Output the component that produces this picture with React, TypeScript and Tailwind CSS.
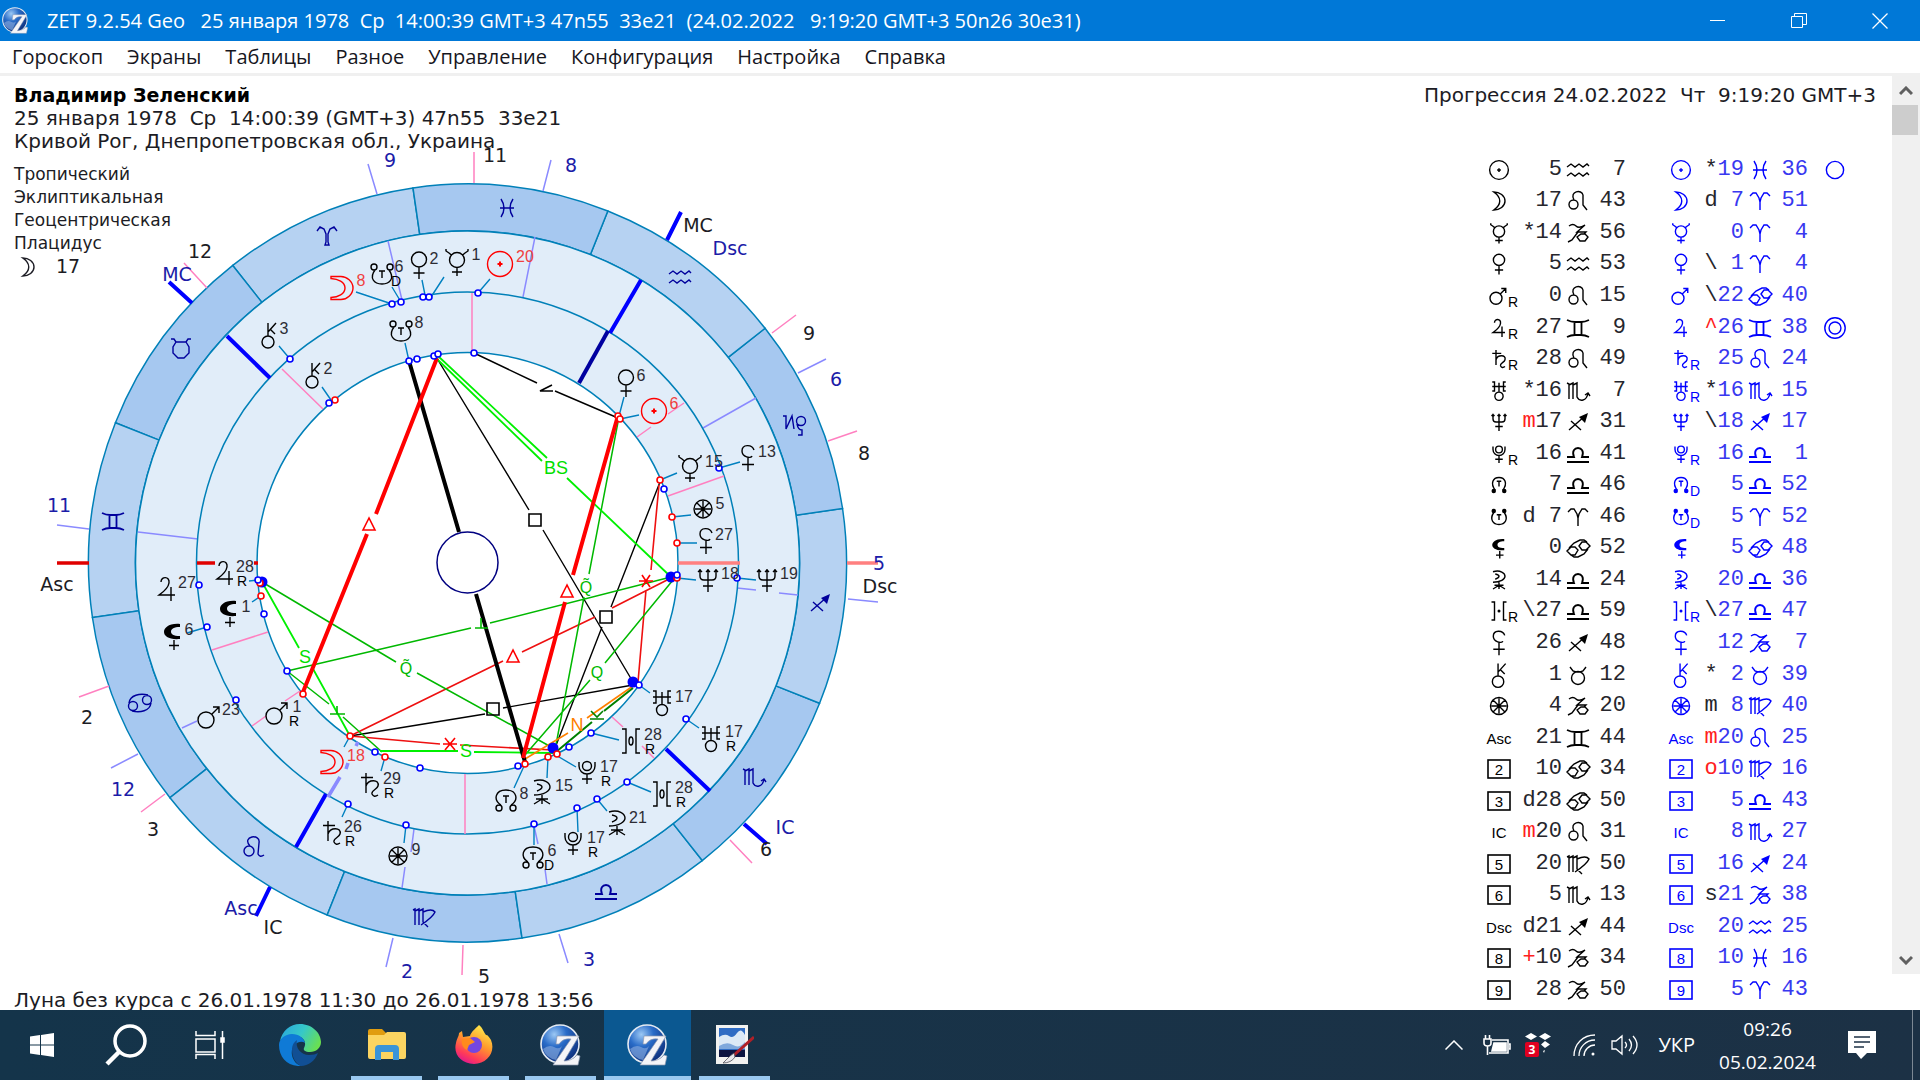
import { clsx } from "clsx";
import type { ReactNode } from "react";

const ring = (x: number, y: number, r: number) =>
  `M${x - r} ${y}a${r} ${r} 0 1 0 ${2 * r} 0a${r} ${r} 0 1 0 ${-2 * r} 0`;

type Shape = { d: string; fill?: string; bold?: boolean };

// every symbol is drawn round 0,0
const SHAPES: Record<string, Shape> = {
  sun: { d: ring(0, 0, 12.5), fill: "M-2.5-1h1.500v-1.500h2v1.500h1.500v2h-1.500v1.500h-2v-1.500h-1.500z" },
  moon: { d: "M-11-11.500H-2C5-12 11-6 11 0S5 12-2 11.500H-11V9.500C-4 9 3 6 3 0S-4-9-11-9.500Z" },
  mercury: { d: ring(0, -2, 7.5) + "M0 5.500V14M-5 10H5M-11-13v2l3 2 3 2.500M11-13v2l-3 2-3 2.500" },
  venus: { d: ring(0, -5.5, 7.5) + "M0 2V14M-5.500 8H5.500" },
  mars: { d: ring(-4, 3, 8) + "M2-3L9-10M3-10H9V-4" },
  jupiter: { d: "M-6-7C-6-13 3-13 2-6 1 0-4 3-8 6H8M4-2V12" },
  saturn: { d: "M-4-12V8M-9-7.500H3M-4 1C-2-6 10-6 8 1 7 5 1 5 2 9q2 4 6 1" },
  uranus: { d: ring(0, 7, 5.5) + "M-9-12h3v12h-3M9-12h-3v12h3M-9-6H9M0-11V1" },
  neptune: { d: "M-8-11v7q0 4 4 4H4q4 0 4-4v-7M0-11V12M-5 6H5M-10-8l2-2 2 2M-2-8l2-2 2 2M6-8l2-2 2 2" },
  pluto: { d: ring(0, -6, 4.5) + "M-8-10v4a8 8 0 0 0 16 0v-4M0 2V12M-5 7H5" },
  north: { d: ring(-7, 8, 3) + ring(7, 8, 3) + "M-5 5C-13 0-11-10 0-10S13 0 5 5M-3-4H3M0-4V3" },
  south: { d: ring(-8, -7, 3) + ring(8, -7, 3) + "M-7-4C-13 4-8 10 0 10S13 4 7-4M-3-3H3M0-3V4" },
  lilith: { d: "M1 4V14M-4 9.500H6", fill: "M7-12C-4-13-9-8-9-4S-4 4 7 3V0C0 0-2-2-2-4.500S1-9 7-9Z" },
  pallas: { d: "M-8-11C2-14 8-9 8-5S2 3-8 3M-5-8q5 1 5 3t-5 4M0 3V12M-6 7H6M0 7L-8 12M0 7L8 12" },
  transpluto: { d: "M-9-12h4V12h-4M9-12H5V12h4M0-4a2 4 0 0 0 0 8a2 4 0 0 0 0-8" },
  ceres: { d: "M6-8C4-14-6-14-6-7-6-1 3 1 4-2M0-1V13M-6 6.500H6" },
  chiron: { d: ring(-1, 7, 6) + "M-1 1V-12M-1-3L7-12M1-6L6-1" },
  fortune: { d: ring(0, 0, 9) + "M-8 0H8M0-8V8M-6-6L6 6M-6 6L6-6" },
  asteroid: { d: ring(0, 0, 7) + ring(0, 0, 12) },
  disc: { d: ring(0, 0, 11.5) },
  // table variants
  moonSmall: { d: "M-7-12C1-12 8-7 8 0S1 12-7 12C-1 8 1 4 1 0S-1-8-7-12Z" },
  northSmall: { d: "M-5 7C-12-2-8-10 0-10S12-2 5 7M-3-5H3M0-5V2", fill: ring(-7, 8, 3) + ring(7, 8, 3) },
  southSmall: { d: "M-7-6C-13 3-8 10 0 10S13 3 7-6M-3-3H3M0-3V4", fill: ring(-7, -8, 3) + ring(7, -8, 3) },
  transplutoSmall: { d: "M-10-12h4V12h-4M10-12H6V12h4", fill: ring(0, 0, 2) },
  // zodiac
  aries: { d: "M-10-5l3-3h3l3 5 1 4V9M10-5l-3-3H4L1-3 0 1" },
  taurus: { d: ring(0, 3, 6.5) + "M-8-8l3 4 3 1H2l3-1 3-4" },
  gemini: { d: "M-11-8q4 2 8 2H3q4 0 8-2M-11 9q4-2 8-2H3q4 0 8 2M-3.500-6V7M3.500-6V7", bold: true },
  cancer: { d: "M-11 3l4-4h4l3 3-3 5h-4zM1-2l3-4h4l4 4-4 4H4zM-9 0l5-5 6-3h4l3 2M10 1L6 6 0 9h-4l-3-2" },
  leo: { d: ring(-4.5, 3.5, 4.5) + "M-4-1C-9-10 4-12 5-6V4l4 5" },
  virgo: { d: "M-11-7l2-1V8M-9-6l4-2V8M-5-6l4-2V5l5 5M-1-5Q8-9 11-5 9 0-3 8" },
  libra: { d: "M-11 8H11M-11 3H-4C-9-9 9-9 4 3H11", bold: true },
  scorpio: { d: "M-11-8l2 1V8M-9-6l4-2V8M-5-6l4-2V6q2 4 6 3 4-1 5-7M7 4l3-2 2 3" },
  sagittarius: { d: "M-9 8L7-6M-7-1L3 8", fill: "M10-9L1-5 7 1Z" },
  capricorn: { d: "M-9-7q4-3 7 0t9-1L-1-1H8L6 1M-10 9l4-2 6-8M-1 4l4-3h4l3 3-3 4H2z" },
  aquarius: { d: "M-11-3l4-3 4 3 4-3 4 3 4-3 2 2M-11 6l4-3 4 3 4-3 4 3 4-3 2 2" },
  pisces: { d: "M-6-9Q0 0-6 9M6-9Q0 0 6 9M-7 0H7" },
  ariesRing: { d: "M-10-5l3-4 4 2 2 5V6l-1 3H2L1 6V-2l2-5 4-2 3 4" },
  taurusRing: { d: "M-10-9h3l2 3H5l2-3h3M-5-6L-8-1V5l5 5H3L8 5V-1L5-6" },
  cancerRing: { d: ring(-7, 3, 4.5) + ring(7, -3, 4.5) + "M-11 0C-10-8 0-10 8-8M11 0C10 8 0 10-8 8" },
  leoRing: { d: ring(-5, 4, 5) + "M-4-1C-13-11 7-14 5-4L4 7q2 4 6 1" },
  capricornRing: { d: ring(7, -3, 4.5) + "M-11-8h3v13L-2-8 0 5M3 0q1 6 5 6v5H4" },
};

function Symbol({ name, x = 0, y = 0, scale = 1 }: { name: string; x?: number; y?: number; scale?: number }) {
  const shape = SHAPES[name];
  return (
    <g transform={`translate(${x} ${y}) scale(${scale})`}>
      <path
        d={shape.d}
        fill="none"
        stroke="currentColor"
        strokeWidth={shape.bold ? 1.8 : 1.4}
        vectorEffect="non-scaling-stroke"
      />
      {shape.fill && <path d={shape.fill} fill="currentColor" />}
    </g>
  );
}

const CX = 467.5;
const CY = 563;
const ASC = 81.73;

const polar = (deg: number, r: number) => {
  const a = (deg * Math.PI) / 180;
  return [CX + r * Math.cos(a), CY - r * Math.sin(a)];
};

const SIGNS = [
  { name: "ariesRing", x: 327, y: 236 },
  { name: "taurusRing", x: 181, y: 348 },
  { name: "gemini", x: 113, y: 521 },
  { name: "cancerRing", x: 140, y: 703 },
  { name: "leoRing", x: 254, y: 847 },
  { name: "virgo", x: 424, y: 917 },
  { name: "libra", x: 606, y: 891 },
  { name: "scorpio", x: 754, y: 777 },
  { name: "sagittarius", x: 820, y: 603 },
  { name: "capricornRing", x: 794, y: 424 },
  { name: "aquarius", x: 680, y: 277 },
  { name: "pisces", x: 507, y: 208 },
];

type Line = [number, number, number, number];

const PINK: Line[] = [
  [474, 152, 474, 183], [796, 315, 772, 333], [857, 431, 828, 441], [730, 840, 752, 863],
  [463, 945, 462, 975], [165, 794, 141, 812], [109, 686, 79, 697], [184, 263, 207, 288],
  [282, 369, 323, 409], [472, 293, 472, 352], [684, 403, 668, 414], [651, 427, 637, 437], [724, 476, 668, 496],
  [612, 717, 623, 727], [642, 746, 654, 758], [465, 774, 465, 834], [300, 691, 285, 701], [266, 716, 252, 726], [268, 632, 212, 650],
];

const VIOLET: Line[] = [
  [368, 164, 377, 194], [551, 160, 543, 191], [826, 359, 798, 373], [848, 599, 878, 602],
  [559, 934, 568, 963], [393, 938, 386, 967], [138, 754, 111, 768], [57, 525, 89, 529],
  [388, 241, 402, 300], [535, 237, 523, 297], [756, 398, 703, 428], [737, 588, 756, 590], [779, 593, 798, 595],
  [534, 826, 538, 844], [545, 869, 547, 884], [414, 829, 411, 852], [405, 867, 402, 888], [182, 728, 197, 721], [138, 532, 198, 539],
];

const AXES: Line[] = [
  [681, 212, 667, 240], [744, 824, 767, 844], [270, 887, 256, 916], [169, 282, 192, 303],
  [641, 280, 610, 333], [666, 749, 710, 791], [326, 794, 296, 847], [227, 336, 270, 378],
];

const POINTERS: Line[] = [
  [356, 292, 392, 304], [392, 287, 401, 302], [422, 280, 425, 295], [444, 277, 431, 297], [490, 279, 478, 293],
  [279, 346, 290, 359], [740, 462, 719, 468], [756, 580, 737, 578], [699, 728, 686, 719], [651, 792, 627, 782],
  [607, 811, 597, 799], [578, 832, 577, 808], [534, 845, 534, 824], [404, 843, 406, 825], [342, 817, 348, 804],
  [187, 633, 207, 627], [405, 343, 409, 361], [322, 387, 331, 400], [624, 397, 619, 416], [639, 415, 620, 419],
  [677, 473, 660, 480], [691, 515, 672, 517], [697, 543, 677, 543], [696, 580, 677, 578], [650, 693, 639, 685],
  [619, 740, 591, 733], [576, 767, 554, 754], [547, 778, 548, 757], [514, 788, 525, 764], [381, 771, 385, 757],
  [344, 747, 350, 736], [252, 602, 261, 596], [249, 581, 258, 580],
];

const ASPECTS: { color: string; width: number; lines: Line[] }[] = [
  {
    color: "#000000",
    width: 1.4,
    lines: [
      [438, 360, 529, 510], [543, 530, 633, 682], [474, 353, 537, 383], [555, 391, 618, 418],
      [660, 482, 611, 607], [602, 627, 555, 748], [350, 736, 485, 714], [503, 708, 633, 685],
    ],
  },
  {
    color: "#ee1010",
    width: 1.6,
    lines: [
      [659, 485, 651, 570], [646, 590, 638, 682], [350, 736, 503, 661], [522, 652, 595, 617], [612, 608, 673, 577],
      [350, 736, 440, 744], [460, 745, 553, 750],
    ],
  },
  {
    color: "#00b800",
    width: 1.5,
    lines: [
      [618, 422, 589, 574], [584, 597, 555, 750], [287, 671, 471, 628], [490, 623, 671, 577],
      [262, 582, 396, 662], [417, 673, 553, 748], [287, 671, 329, 704], [343, 717, 382, 752],
      [673, 580, 605, 663], [590, 680, 525, 755],
    ],
  },
  {
    color: "#00f000",
    width: 1.8,
    lines: [
      [438, 356, 547, 458], [436, 358, 542, 461], [567, 478, 671, 577], [262, 582, 299, 648],
      [312, 667, 350, 736], [380, 751, 458, 751], [474, 752, 553, 753],
    ],
  },
  { color: "#ff8000", width: 1.6, lines: [[525, 759, 568, 733], [587, 718, 633, 686]] },
  { color: "#008000", width: 2, lines: [[633, 688, 604, 711], [592, 722, 556, 752]] },
  { color: "#000000", width: 4, lines: [[409, 361, 459, 532], [476, 594, 525, 762]] },
  {
    color: "#ff0000",
    width: 4,
    lines: [[437, 358, 376, 514], [367, 534, 303, 692], [617, 419, 573, 575], [565, 602, 523, 758]],
  },
];

const BLUE_DOTS = [
  [290, 359], [392, 304], [401, 302], [423, 297], [429, 297], [478, 293], [719, 468], [737, 578], [686, 719],
  [627, 782], [597, 799], [577, 808], [534, 824], [199, 585], [207, 627], [236, 700], [348, 804], [406, 825],
  [409, 361], [417, 359], [434, 356], [438, 354], [474, 353], [329, 403], [664, 489], [677, 575], [639, 685],
  [591, 733], [569, 747], [518, 766], [258, 580], [264, 614], [287, 671], [375, 752], [420, 768],
];

const RED_DOTS = [
  [335, 400], [618, 416], [620, 419], [660, 480], [672, 517], [677, 543], [677, 578], [557, 754], [548, 757],
  [525, 764], [260, 583], [261, 596], [303, 694], [350, 736], [385, 757],
];

const BODIES: { name: string; x: number; y: number; deg: string; dx: number; dy: number; mark?: string; red?: boolean }[] = [
  { name: "moon", x: 342, y: 288, deg: "8", dx: 361, dy: 280, red: true },
  { name: "south", x: 382, y: 274, deg: "6", dx: 399, dy: 266, mark: "D" },
  { name: "venus", x: 419, y: 265, deg: "2", dx: 434, dy: 258 },
  { name: "mercury", x: 457, y: 262, deg: "1", dx: 476, dy: 254 },
  { name: "sun", x: 500, y: 264, deg: "20", dx: 525, dy: 256, red: true },
  { name: "chiron", x: 269, y: 335, deg: "3", dx: 284, dy: 328 },
  { name: "ceres", x: 748, y: 458, deg: "13", dx: 767, dy: 451 },
  { name: "neptune", x: 767, y: 580, deg: "19", dx: 789, dy: 573 },
  { name: "uranus", x: 711, y: 739, deg: "17", dx: 734, dy: 731, mark: "R" },
  { name: "transpluto", x: 662, y: 794, deg: "28", dx: 684, dy: 787, mark: "R" },
  { name: "pallas", x: 617, y: 823, deg: "21", dx: 638, dy: 817 },
  { name: "pluto", x: 573, y: 843, deg: "17", dx: 596, dy: 837, mark: "R" },
  { name: "north", x: 533, y: 857, deg: "6", dx: 552, dy: 850, mark: "D" },
  { name: "fortune", x: 398, y: 856, deg: "9", dx: 416, dy: 849 },
  { name: "saturn", x: 332, y: 833, deg: "26", dx: 353, dy: 826, mark: "R" },
  { name: "mars", x: 210, y: 717, deg: "23", dx: 231, dy: 709 },
  { name: "lilith", x: 173, y: 636, deg: "6", dx: 189, dy: 629 },
  { name: "jupiter", x: 167, y: 589, deg: "27", dx: 187, dy: 582 },
  { name: "south", x: 401, y: 331, deg: "8", dx: 419, dy: 322 },
  { name: "chiron", x: 313, y: 375, deg: "2", dx: 328, dy: 368 },
  { name: "venus", x: 626, y: 383, deg: "6", dx: 641, dy: 375 },
  { name: "sun", x: 654, y: 411, deg: "6", dx: 674, dy: 403, red: true },
  { name: "mercury", x: 690, y: 468, deg: "15", dx: 714, dy: 461 },
  { name: "fortune", x: 703, y: 509, deg: "5", dx: 720, dy: 503 },
  { name: "ceres", x: 706, y: 541, deg: "27", dx: 724, dy: 534 },
  { name: "neptune", x: 708, y: 580, deg: "18", dx: 730, dy: 573 },
  { name: "uranus", x: 662, y: 703, deg: "17", dx: 684, dy: 696 },
  { name: "transpluto", x: 631, y: 741, deg: "28", dx: 653, dy: 734, mark: "R" },
  { name: "pluto", x: 587, y: 772, deg: "17", dx: 609, dy: 766, mark: "R" },
  { name: "pallas", x: 542, y: 792, deg: "15", dx: 564, dy: 785 },
  { name: "north", x: 506, y: 800, deg: "8", dx: 524, dy: 793 },
  { name: "saturn", x: 370, y: 785, deg: "29", dx: 392, dy: 778, mark: "R" },
  { name: "moon", x: 332, y: 762, deg: "18", dx: 356, dy: 755, red: true },
  { name: "mars", x: 278, y: 713, deg: "1", dx: 297, dy: 706, mark: "R" },
  { name: "lilith", x: 229, y: 613, deg: "1", dx: 246, dy: 606 },
  { name: "jupiter", x: 225, y: 573, deg: "28", dx: 245, dy: 566, mark: "R" },
];

const LABELS: { text: string; x: number; y: number; blue?: boolean }[] = [
  { text: "9", x: 390, y: 160, blue: true },
  { text: "11", x: 495, y: 155 },
  { text: "8", x: 571, y: 165, blue: true },
  { text: "MC", x: 698, y: 225 },
  { text: "Dsc", x: 730, y: 248, blue: true },
  { text: "9", x: 809, y: 333 },
  { text: "6", x: 836, y: 379, blue: true },
  { text: "8", x: 864, y: 453 },
  { text: "5", x: 879, y: 563, blue: true },
  { text: "Dsc", x: 880, y: 586 },
  { text: "IC", x: 785, y: 827, blue: true },
  { text: "6", x: 766, y: 849 },
  { text: "3", x: 589, y: 959, blue: true },
  { text: "5", x: 484, y: 976 },
  { text: "2", x: 407, y: 971, blue: true },
  { text: "IC", x: 273, y: 927 },
  { text: "Asc", x: 241, y: 908, blue: true },
  { text: "3", x: 153, y: 829 },
  { text: "12", x: 123, y: 789, blue: true },
  { text: "2", x: 87, y: 717 },
  { text: "Asc", x: 57, y: 584 },
  { text: "11", x: 59, y: 505, blue: true },
  { text: "MC", x: 177, y: 274, blue: true },
  { text: "12", x: 200, y: 251 },
];

function Lines({ lines, color, width }: { lines: Line[]; color: string; width: number }) {
  return (
    <path
      d={lines.map(([x1, y1, x2, y2]) => `M${x1} ${y1}L${x2} ${y2}`).join("")}
      stroke={color}
      strokeWidth={width}
      fill="none"
    />
  );
}

function sector(i: number) {
  const from = 180 - ASC + i * 30;
  const [x1, y1] = polar(from, 379);
  const [x2, y2] = polar(from + 30, 379);
  const [x3, y3] = polar(from + 30, 332);
  const [x4, y4] = polar(from, 332);
  return `M${x1} ${y1}A379 379 0 0 0 ${x2} ${y2}L${x3} ${y3}A332 332 0 0 1 ${x4} ${y4}Z`;
}

function Wheel() {
  return (
    <svg viewBox="0 76 920 934" className="col-start-1 row-start-1 h-[934px] w-[920px]" role="img" aria-label="Натальная карта">
      {SIGNS.map((s, i) => (
        <path key={s.name} d={sector(i)} fill={i % 2 ? "#a6c8f0" : "#b6d2f2"} stroke="#0080b8" strokeWidth="1.5" />
      ))}
      <circle cx={CX} cy={CY} r="332" fill="#e1edf9" stroke="#0080b8" strokeWidth="1.5" />
      <Lines lines={VIOLET} color="#8a8aff" width={1.5} />
      <circle cx={CX} cy={CY} r="271" fill="none" stroke="#0080b8" strokeWidth="1.5" />
      <circle cx={CX} cy={CY} r="210.5" fill="#ffffff" stroke="#0080b8" strokeWidth="1.5" />
      <Lines lines={PINK} color="#ff80c0" width={1.5} />
      <Lines lines={AXES} color="#0000ff" width={4} />
      <Lines lines={[[608, 331, 579, 383]]} color="#0000a0" width={4} />
      <Lines lines={[[340, 777, 328, 797], [348, 763, 346, 769], [358, 742, 356, 746]]} color="#8a8aff" width={3.5} />
      <Lines lines={[[57, 563, 89, 563], [197, 563, 215, 563], [254, 563, 258, 563]]} color="#e00000" width={3.5} />
      <Lines lines={[[847, 563, 878, 563], [678, 563, 740, 563]]} color="#ff8080" width={3.5} />
      <Lines lines={POINTERS} color="#0080c0" width={1.4} />

      {ASPECTS.map((a, i) => (
        <Lines key={i} lines={a.lines} color={a.color} width={a.width} />
      ))}
      <circle cx={CX} cy="562.5" r="30.5" fill="#ffffff" stroke="#000080" strokeWidth="1.5" />

      <g fill="none" strokeWidth="1.6">
        <path stroke="#ff0000" d="M369 518l-6 12h12zM567 585l-6 12h12zM513 650l-6 12h12z" />
        <path stroke="#ff0000" d="M639 581H653M642 575L650 587M650 575L642 587M443 744H457M445 738L455 750M455 738L445 750" />
        <path stroke="#000000" d="M529 514h12v12h-12zM600 611h12v12h-12zM487 703h12v12h-12z" />
        <path stroke="#000000" d="M552 385L540 391H553" />
        <path stroke="#00b800" d="M475 628H488M481 618V628M330 714H345M337 706V714" />
        <path stroke="#008000" d="M590 719H604M591 711L597 717 603 711" />
      </g>
      <g fontFamily="'Liberation Sans', sans-serif" fontSize="18" textAnchor="middle" dominantBaseline="central">
        <text x="556" y="468" fill="#00e000">BS</text>
        <text x="305" y="657" fill="#00e000">S</text>
        <text x="466" y="751" fill="#00e000">S</text>
        <text x="586" y="587" fontSize="16" fill="#00b800">Q̃</text>
        <text x="406" y="668" fontSize="16" fill="#00b800">Q̃</text>
        <text x="597" y="672" fontSize="16" fill="#00b800">Q</text>
        <text x="577" y="725" fill="#ff8000">N</text>
      </g>

      {[[671, 577], [633, 682], [553, 748], [262, 582]].map(([x, y]) => (
        <circle key={x} cx={x} cy={y} r="5.5" fill="#0000ff" />
      ))}
      <g fill="#ffffff" strokeWidth="1.6">
        {RED_DOTS.map(([x, y]) => (
          <circle key={`${x}-${y}`} cx={x} cy={y} r="3" stroke="#ff0000" />
        ))}
        {BLUE_DOTS.map(([x, y]) => (
          <circle key={`${x}-${y}`} cx={x} cy={y} r="3" stroke="#0000ff" />
        ))}
      </g>

      <g className="text-[#00009c]">
        {SIGNS.map((s) => (
          <Symbol key={s.name} name={s.name} x={s.x} y={s.y} />
        ))}
      </g>
      {BODIES.map((b, i) => (
        <g key={i} className={b.red ? "text-[#ff0000]" : "text-black"}>
          <Symbol name={b.name} x={b.x} y={b.y} />
          <g
            fontFamily="'Liberation Sans', sans-serif"
            fontSize="16"
            textAnchor="middle"
            dominantBaseline="central"
            fill={b.red ? "#f04040" : "#2c2c34"}
          >
            <text x={b.dx} y={b.dy}>{b.deg}</text>
            {b.mark && (
              <text x={b.dx - 3} y={b.dy + 15} fontSize="14" fill="#000000">
                {b.mark}
              </text>
            )}
          </g>
        </g>
      ))}
      <g fontFamily="'DejaVu Sans', sans-serif" fontSize="19" textAnchor="middle" dominantBaseline="central">
        {LABELS.map((l, i) => (
          <text key={i} x={l.x} y={l.y} fill={l.blue ? "#1c1ca8" : "#1c1c24"}>
            {l.text}
          </text>
        ))}
      </g>
    </svg>
  );
}

type Cell = { flag?: string; red?: boolean; deg: string; sign: string; min: string; mark?: string };

const cell = (flag: string, deg: string, sign: string, min: string, mark?: string, red?: boolean): Cell => ({
  flag, deg, sign, min, mark, red,
});

const ROWS: { name: string; natal: Cell; prog: Cell; extra?: string }[] = [
  { name: "sun", natal: cell("", "5", "aquarius", "7"), prog: cell("*", "19", "pisces", "36"), extra: "disc" },
  { name: "moonSmall", natal: cell("", "17", "leo", "43"), prog: cell("d", "7", "aries", "51") },
  { name: "mercury", natal: cell("*", "14", "capricorn", "56"), prog: cell("", "0", "aries", "4") },
  { name: "venus", natal: cell("", "5", "aquarius", "53"), prog: cell("\\", "1", "aries", "4") },
  { name: "mars", natal: cell("", "0", "leo", "15", "R"), prog: cell("\\", "22", "cancer", "40") },
  { name: "jupiter", natal: cell("", "27", "gemini", "9", "R"), prog: cell("^", "26", "gemini", "38", undefined, true), extra: "asteroid" },
  { name: "saturn", natal: cell("", "28", "leo", "49", "R"), prog: cell("", "25", "leo", "24", "R") },
  { name: "uranus", natal: cell("*", "16", "scorpio", "7"), prog: cell("*", "16", "scorpio", "15", "R") },
  { name: "neptune", natal: cell("m", "17", "sagittarius", "31", undefined, true), prog: cell("\\", "18", "sagittarius", "17") },
  { name: "pluto", natal: cell("", "16", "libra", "41", "R"), prog: cell("", "16", "libra", "1", "R") },
  { name: "northSmall", natal: cell("", "7", "libra", "46"), prog: cell("", "5", "libra", "52", "D") },
  { name: "southSmall", natal: cell("d", "7", "aries", "46"), prog: cell("", "5", "aries", "52", "D") },
  { name: "lilith", natal: cell("", "0", "cancer", "52"), prog: cell("", "5", "cancer", "48") },
  { name: "pallas", natal: cell("", "14", "libra", "24"), prog: cell("", "20", "libra", "36") },
  { name: "transplutoSmall", natal: cell("\\", "27", "libra", "59", "R"), prog: cell("\\", "27", "libra", "47", "R") },
  { name: "ceres", natal: cell("", "26", "sagittarius", "48"), prog: cell("", "12", "capricorn", "7") },
  { name: "chiron", natal: cell("", "1", "taurus", "12"), prog: cell("*", "2", "taurus", "39") },
  { name: "fortune", natal: cell("", "4", "capricorn", "20"), prog: cell("m", "8", "virgo", "40") },
  { name: "Asc", natal: cell("", "21", "gemini", "44"), prog: cell("m", "20", "leo", "25", undefined, true) },
  { name: "2", natal: cell("", "10", "cancer", "34"), prog: cell("o", "10", "virgo", "16", undefined, true) },
  { name: "3", natal: cell("d", "28", "cancer", "50"), prog: cell("", "5", "libra", "43") },
  { name: "IC", natal: cell("m", "20", "leo", "31", undefined, true), prog: cell("", "8", "scorpio", "27") },
  { name: "5", natal: cell("", "20", "virgo", "50"), prog: cell("", "16", "sagittarius", "24") },
  { name: "6", natal: cell("", "5", "scorpio", "13"), prog: cell("s", "21", "capricorn", "38") },
  { name: "Dsc", natal: cell("d", "21", "sagittarius", "44"), prog: cell("", "20", "aquarius", "25") },
  { name: "8", natal: cell("+", "10", "capricorn", "34", undefined, true), prog: cell("", "10", "pisces", "16") },
  { name: "9", natal: cell("", "28", "capricorn", "50"), prog: cell("", "5", "aries", "43") },
];

// symbols that keep their full height in the table
const TALL = ["fortune", "ceres", "chiron"];

function RowHead({ name, mark }: { name: string; mark?: string }) {
  return (
    <svg viewBox="-14 -14 34 28" className="block h-7 w-[34px]" fill="currentColor">
      {SHAPES[name] ? (
        <Symbol name={name} scale={TALL.includes(name) ? 0.95 : 0.75} />
      ) : (
        <g fontFamily="'Liberation Sans', sans-serif" fontSize="15" textAnchor="middle" dominantBaseline="central">
          {name.length === 1 && (
            <rect x="-11" y="-9" width="22" height="18" fill="none" stroke="currentColor" strokeWidth="1.6" />
          )}
          <text x={0} y={0}>
            {name}
          </text>
        </g>
      )}
      {mark && (
        <text x="9" y="11" fontFamily="'Liberation Sans', sans-serif" fontSize="14">
          {mark}
        </text>
      )}
    </svg>
  );
}

function Position({ name, data, blue }: { name: string; data: Cell; blue?: boolean }) {
  const ink = blue ? "text-[#0000ff]" : "text-black";
  const digits = blue ? "text-[#3838f0]" : "text-[#26262c]";
  return (
    <>
      <th className={clsx("w-[34px] p-0 font-normal", ink)}>
        <RowHead name={name} mark={data.mark} />
      </th>
      <td className={clsx("w-[43px] whitespace-pre p-0 text-right", digits)}>
        {data.flag && <span className={data.red ? "text-[#ff2020]" : "text-[#26262c]"}>{data.flag}</span>}
        {data.deg.padStart(2, " ")}
      </td>
      <td className={clsx("w-8 p-0", ink)}>
        <svg viewBox="-16 -13 32 26" className="block h-6.5 w-8">
          <Symbol name={data.sign} />
        </svg>
      </td>
      <td className={clsx("w-8 p-0 text-right", digits)}>{data.min}</td>
    </>
  );
}

function Positions() {
  return (
    <table className="mr-[30px] h-[852px] border-collapse font-['Liberation_Mono',monospace] text-[22px] leading-6">
      <tbody>
        {ROWS.map((row) => (
          <tr key={row.name}>
            <Position name={row.name} data={row.natal} />
            <td className="w-[41px] p-0" />
            <Position name={row.name} data={row.prog} blue />
            <td className="w-[54px] p-0 text-[#0000ff]">
              {row.extra && (
                <svg viewBox="-14 -14 28 28" className="mx-auto block size-7">
                  <Symbol name={row.extra} scale={row.extra === "disc" ? 0.75 : 0.85} />
                </svg>
              )}
            </td>
          </tr>
        ))}
      </tbody>
    </table>
  );
}

function ZetLogo({ className }: { className: string }) {
  return (
    <svg viewBox="0 0 42 42" className={className}>
      <defs>
        <radialGradient id="globe" cx="0.35" cy="0.25" r="0.8">
          <stop offset="0" stopColor="#9cc8f4" />
          <stop offset="0.4" stopColor="#2a6cc8" />
          <stop offset="1" stopColor="#0c2c78" />
        </radialGradient>
      </defs>
      <circle cx="20" cy="20" r="19" fill="url(#globe)" stroke="#e4eaf2" strokeWidth="1.6" />
      <path d="M3 25q6-5 11-2t8-1l-6 14Q6 34 3 25z" fill="#7fa4dc" opacity="0.7" />
      <path d="M17 12H39L24 37q8 0 13-6l3 1-2 9H13L31 15q-8-1-12 5h-3z" fill="#f4f4f8" stroke="#8c98b0" strokeWidth="0.7" />
    </svg>
  );
}

function TitleBar() {
  return (
    <header className="flex h-[41px] shrink-0 items-center bg-[#0078d7] font-['Open_Sans',sans-serif] text-[20px] text-white">
      <ZetLogo className="mr-[18px] ml-[2px] size-[27px]" />
      <h1 className="flex-1 whitespace-pre">
        {"ZET 9.2.54 Geo   25 января 1978  Ср  14:00:39 GMT+3 47n55  33e21  (24.02.2022   9:19:20 GMT+3 50n26 30e31)"}
      </h1>
      <button aria-label="Свернуть" className="grid h-full w-[81px] place-items-center">
        <svg viewBox="0 0 16 16" className="size-4" stroke="currentColor">
          <path d="M0 7.500H15" />
        </svg>
      </button>
      <button aria-label="Восстановить" className="grid h-full w-[81px] place-items-center">
        <svg viewBox="0 0 16 16" className="size-4" fill="none" stroke="currentColor">
          <path d="M.5 3.500h11v11H.5zM3.500 3V.5h12v11H12" />
        </svg>
      </button>
      <button aria-label="Закрыть" className="grid h-full w-[81px] place-items-center">
        <svg viewBox="0 0 16 16" className="size-4" stroke="currentColor" strokeWidth="1.3">
          <path d="M.5.5l15 15M15.500.5l-15 15" />
        </svg>
      </button>
    </header>
  );
}

const MENU = ["Гороскоп", "Экраны", "Таблицы", "Разное", "Управление", "Конфигурация", "Настройка", "Справка"];

function MenuBar() {
  return (
    <nav className="flex h-[35px] shrink-0 items-start border-b-3 border-[#f0f0f0] font-['Open_Sans',sans-serif] text-[20px] text-[#16161e]">
      {MENU.map((item) => (
        <button key={item} className="h-8 px-3">
          {item}
        </button>
      ))}
    </nav>
  );
}

function ScrollBar() {
  return (
    <div className="mb-9 flex w-7 shrink-0 flex-col bg-[#f0f0f0]">
      <button aria-label="Вверх" className="grid h-[29px] place-items-center text-[#606060]">
        <svg viewBox="0 0 14 10" className="h-2.5 w-3.5" fill="none" stroke="currentColor" strokeWidth="3">
          <path d="M1 8l6-6 6 6" />
        </svg>
      </button>
      <div className="mr-0.5 h-[30px] bg-[#cdcdcd]" />
      <button aria-label="Вниз" className="mt-auto grid h-[29px] place-items-center text-[#606060]">
        <svg viewBox="0 0 14 10" className="h-2.5 w-3.5" fill="none" stroke="currentColor" strokeWidth="3">
          <path d="M1 2l6 6 6-6" />
        </svg>
      </button>
    </div>
  );
}

function Client() {
  return (
    <main className="flex min-h-0 flex-1 font-['DejaVu_Sans',sans-serif] text-[20px] leading-[23px] text-[#1c1c24]">
      <div className="grid min-w-0 flex-1 overflow-hidden">
        <Wheel />
        <div className="col-start-1 row-start-1 flex justify-between">
          <div className="flex flex-col pt-2 pl-3.5 whitespace-pre">
            <h2 className="text-[19px] font-bold text-black">Владимир Зеленский</h2>
            <p>{"25 января 1978  Ср  14:00:39 (GMT+3) 47n55  33e21"}</p>
            <p>Кривой Рог, Днепропетровская обл., Украина</p>
            <ul className="mt-2.5 text-[17px]">
              <li>Тропический</li>
              <li>Эклиптикальная</li>
              <li>Геоцентрическая</li>
              <li>Плацидус</li>
            </ul>
            <p className="flex items-center text-[19px]">
              <svg viewBox="-14 -11 28 22" className="mr-3.5 h-[22px] w-7">
                <Symbol name="moonSmall" scale={0.75} />
              </svg>
              17
            </p>
            <p className="mt-auto leading-5">Луна без курса с 26.01.1978 11:30 до 26.01.1978 13:56</p>
          </div>
          <div className="flex flex-col items-end justify-between pt-2 pb-1">
            <p className="mr-4 whitespace-pre">{"Прогрессия 24.02.2022  Чт  9:19:20 GMT+3"}</p>
            <Positions />
          </div>
        </div>
      </div>
      <ScrollBar />
    </main>
  );
}

function TaskButton({ label, active, running, children }: { label: string; active?: boolean; running?: boolean; children: ReactNode }) {
  return (
    <button
      aria-label={label}
      className={clsx("flex w-[87px] flex-col items-center justify-end", active && "bg-[#0b5891]")}
    >
      <span className="grid flex-1 place-items-center pt-1">{children}</span>
      <span className={clsx("h-1", active ? "w-full" : "w-[71px]", (running || active) && "bg-[#99c8f0]")} />
    </button>
  );
}

function TaskBar() {
  return (
    <footer className="flex h-[70px] shrink-0 items-stretch bg-linear-to-r from-[#14344a] to-[#1c3145] font-['Open_Sans',sans-serif] text-white">
      <button aria-label="Пуск" className="grid w-[84px] place-items-center">
        <svg viewBox="0 0 24 24" className="size-6" fill="currentColor">
          <path d="M0 3.500l10-1.400V11.500H0zM11 2l13-2v11.500H11zM0 12.500h10v9.400L0 20.500zM11 12.500h13V24l-13-2z" />
        </svg>
      </button>
      <button aria-label="Поиск" className="grid w-[84px] place-items-center">
        <svg viewBox="0 0 42 42" className="size-[42px]" fill="none" stroke="currentColor">
          <circle cx="25" cy="17" r="15" strokeWidth="3.5" />
          <path d="M14 28L2 40" strokeWidth="4.500" />
        </svg>
      </button>
      <button aria-label="Представление задач" className="mr-1 grid w-[84px] place-items-center">
        <svg viewBox="0 0 30 28" className="h-7 w-[30px]" fill="none" stroke="currentColor" strokeWidth="1.500">
          <path d="M1 0v4.500h19V0M1 8h19v13H1zM1 28v-4.500h19V28M27.500 0v28" />
          <path d="M26 7h3v4h-3z" fill="currentColor" />
        </svg>
      </button>
      <TaskButton label="Edge">
        <svg viewBox="0 0 42 42" className="size-[42px]">
          <defs>
            <linearGradient id="wave" x1="0" y1="0.2" x2="1" y2="0.6">
              <stop offset="0" stopColor="#2aa8dc" />
              <stop offset="0.5" stopColor="#36c8c8" />
              <stop offset="1" stopColor="#6ae050" />
            </linearGradient>
          </defs>
          <path d="M1 17C3 7 11 0 21 0c12 0 21 9 21 18 0 6-5 10-11 10-5 0-7-2-6-4 3-5 0-11-7-12C10 11 4 13 1 17z" fill="url(#wave)" />
          <path d="M0 21c0-6 6-11 13-11s12 4 13 9c-5-4-15 2-13 12 1 6 5 10 10 11C9 43 0 34 0 21z" fill="#0f7ad6" />
          <path d="M13 25c0-4 2-7 5-9-2 8 4 15 12 15 4 0 7-1 9-2-3 8-10 13-17 13-5-2-9-8-9-17z" fill="#114f94" />
        </svg>
      </TaskButton>
      <TaskButton label="Проводник" running>
        <svg viewBox="0 0 38 32" className="h-8 w-[38px]">
          <path d="M0 2q0-2 2-2h12l4 4h18v4H0z" fill="#e09c10" />
          <path d="M0 6h16l3-3h17q2 0 2 2v23q0 2-2 2H2q-2 0-2-2z" fill="#fbd461" />
          <path d="M7 31V20q0-4 4-4h16q4 0 4 4v11h-6v-8H13v8z" fill="#3a94d8" />
        </svg>
      </TaskButton>
      <TaskButton label="Firefox" running>
        <svg viewBox="0 0 38 40" className="h-10 w-[38px]">
          <defs>
            <linearGradient id="fox" x1="0.8" y1="0" x2="0.3" y2="1">
              <stop offset="0" stopColor="#fff44f" />
              <stop offset="0.45" stopColor="#ff9a2c" />
              <stop offset="0.8" stopColor="#ff3b58" />
              <stop offset="1" stopColor="#e01890" />
            </linearGradient>
          </defs>
          <path d="M24 0c4 3 5 8 7 10 2 0 3 2 5 5 5 12-4 24-17 24S-2 29 1 18c1-5 3-7 3-10l3-2 1 6 7-1c1-4 5-7 9-11z" fill="url(#fox)" />
          <circle cx="19" cy="20" r="8" fill="#7446e0" />
          <path d="M7 14l8-1 5 4-6 3-2 5c-4-2-6-6-5-11z" fill="#ff8a1c" />
        </svg>
      </TaskButton>
      <TaskButton label="ZET 9" running>
        <ZetLogo className="size-[42px]" />
      </TaskButton>
      <TaskButton label="ZET 9.2.54 Geo" active>
        <ZetLogo className="size-[42px]" />
      </TaskButton>
      <TaskButton label="Рисование" running>
        <svg viewBox="0 0 38 40" className="h-10 w-[38px]">
          <path d="M0 0h32v39H0z" fill="#f2f2f0" />
          <path d="M3 3h26v29H3z" fill="#2f6cc4" />
          <path d="M3 12q6-4 10-1t8-3 8 2v14H3z" fill="#dce9f6" />
          <path d="M3 21q8-5 14-1t12-3v7H3z" fill="#7fa8dc" />
          <path d="M3 25h26v7H3z" fill="#0c1440" />
          <path d="M38 12L18 30" stroke="#b02028" strokeWidth="3" />
          <path d="M18 28l-4 3-7 7q8 0 12-6z" fill="#e8e8ec" stroke="#505058" strokeWidth="0.8" />
        </svg>
      </TaskButton>

      <div className="ml-auto flex items-center">
        <button aria-label="Скрытые значки" className="mr-5">
          <svg viewBox="0 0 18 10" className="h-2.5 w-[18px]" fill="none" stroke="currentColor" strokeWidth="1.5">
            <path d="M.5 9.500L9 1l8.500 8.500" />
          </svg>
        </button>
        <svg viewBox="0 0 28 20" className="mr-3.5 h-5 w-7" fill="none" stroke="currentColor" strokeWidth="1.6">
          <path d="M9 5h16v13H6M26 9h1v5h-1M2.500 0v4M6.500 0v4M1 4h7v4q0 3-3.500 3T1 8zM4.500 11v9" />
          <path d="M11 8h12v8H9z" fill="currentColor" />
        </svg>
        <svg viewBox="0 0 26 26" className="mr-[22px] size-[26px]">
          <path d="M6 1l6 3.500L6 8 0 4.500zM20 1l6 3.500L20 8l-6-3.500zM20 9l5 3.500-5 3.500-4-3.500zM18 19l2-1-1 3z" fill="#ffffff" />
          <rect x="0" y="10" width="14" height="15" rx="2" fill="#e00020" />
          <text x="7" y="22" fontSize="12" fontWeight="bold" textAnchor="middle" fill="#ffffff" fontFamily="'Open Sans', sans-serif">
            3
          </text>
        </svg>
        <svg viewBox="0 0 22 22" className="mr-4 size-[22px]" fill="none" stroke="currentColor" strokeWidth="1.3">
          <path d="M1 22C1 10 10 1 22 1M6 22C6 13 13 6 22 6M11 22c0-6 5-11 11-11" />
          <circle cx="20" cy="20" r="1.500" fill="currentColor" stroke="none" />
        </svg>
        <svg viewBox="0 0 28 22" className="mr-5 h-[22px] w-7" fill="none" stroke="currentColor" strokeWidth="1.3">
          <path d="M1 7h4l6-5v18l-6-5H1zM14 8q3 3 0 6M18 5q5 6 0 12M22 2q8 9 0 18" />
        </svg>
        <button className="mr-6 text-[20px]">УКР</button>
        <time className="mr-8 pt-0.5 text-center text-[19px] leading-[33px]">
          09:26
          <br />
          05.02.2024
        </time>
        <button aria-label="Уведомления" className="mr-9">
          <svg viewBox="0 0 28 28" className="size-7">
            <path d="M0 0h28v22h-9l-6 6-5-6H0z" fill="#ffffff" />
            <path d="M6 6h16M6 11h16M6 16h10" stroke="#1c3145" strokeWidth="1.6" />
          </svg>
        </button>
        <div className="mr-[7px] h-[70px] w-px bg-[#7c8894]" />
      </div>
    </footer>
  );
}

export default function App() {
  return (
    <div className="flex h-screen flex-col overflow-hidden bg-white">
      <TitleBar />
      <MenuBar />
      <Client />
      <TaskBar />
    </div>
  );
}
